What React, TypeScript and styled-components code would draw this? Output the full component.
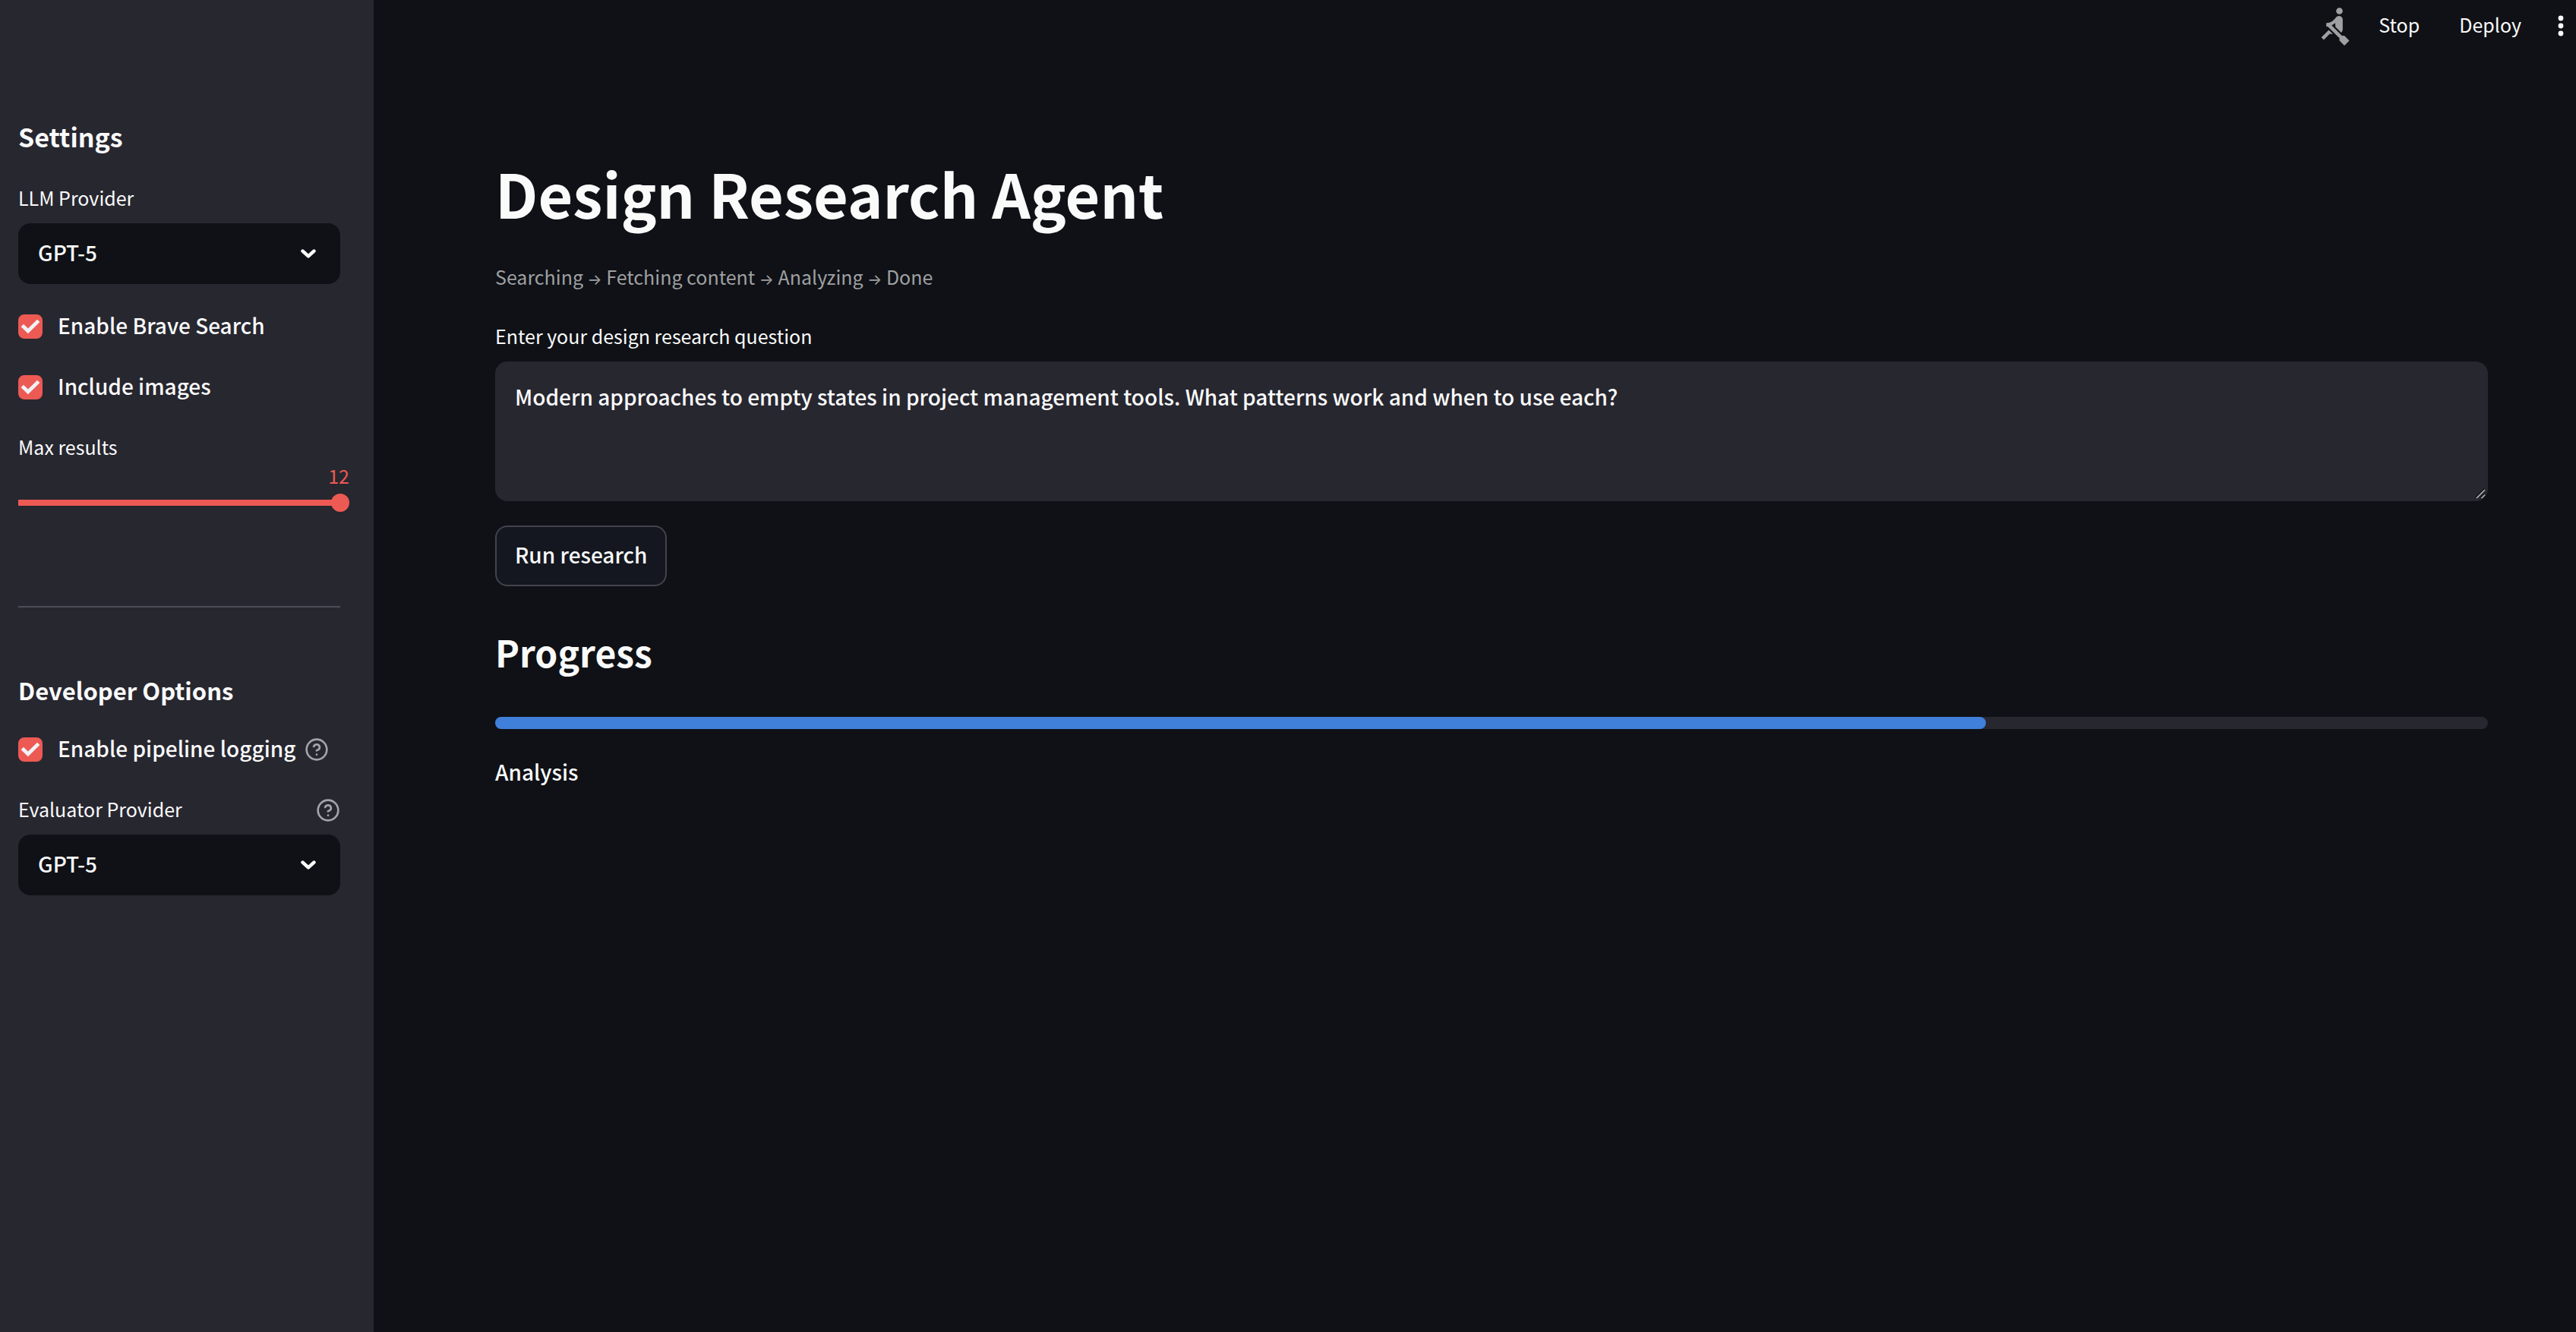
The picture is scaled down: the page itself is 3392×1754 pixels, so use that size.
import React, { useState } from 'react';
import styled, { createGlobalStyle } from 'styled-components';
import { MdRowing } from 'react-icons/md';

const color = {
  page: '#0f1116',
  panel: '#272730',
  text: '#fafafa',
  muted: '#9fa0a2',
  help: '#a3a4a8',
  accent: '#ed5a53',
  bar: '#4080da',
  rule: '#4b4c55',
  button: '#141720',
  buttonBorder: '#41444c',
};

const GlobalStyle = createGlobalStyle`
  *, *::before, *::after { box-sizing: border-box; }
  body {
    margin: 0;
    background: ${color.page};
    color: ${color.text};
    font-family: "Noto Sans CJK SC", "Noto Sans", sans-serif;
    font-size: 28px;
    font-weight: 500;
    line-height: 44px;
  }
  button, input, select, textarea { font: inherit; color: inherit; }
`;

const Shell = styled.div`
  display: flex;
  min-height: 100vh;
`;

const Sidebar = styled.aside`
  flex: 0 0 492px;
  display: flex;
  flex-direction: column;
  gap: 32px;
  padding: 154px 44px 64px 24px;
  background: ${color.panel};
`;

const SidebarTitle = styled.h2`
  margin: 0;
  font-size: 34px;
  line-height: 52px;
  font-weight: 700;
`;

const SidebarSubtitle = styled.h3`
  margin: 0;
  font-size: 31px;
  line-height: 44px;
  font-weight: 700;
`;

const Divider = styled.hr`
  width: 100%;
  height: 2px;
  margin: 64px 0 55px;
  border: 0;
  background: ${color.rule};
`;

const Field = styled.div`
  display: flex;
  flex-direction: column;
  gap: 8px;
`;

const LabelRow = styled.div`
  display: flex;
  justify-content: space-between;
  min-height: 48px;
`;

const FieldLabel = styled.label`
  font-size: 25px;
  font-weight: 400;
  line-height: 44px;
`;

const HelpButton = styled.button`
  display: flex;
  align-self: center;
  padding: 0;
  border: 0;
  background: none;
  color: ${color.help};
`;

const Stack = styled.div`
  display: grid;
  > * { grid-area: 1 / 1; }
`;

const SelectBox = styled.select`
  appearance: none;
  width: 100%;
  height: 80px;
  padding: 0 64px 4px 26px;
  border: 0;
  border-radius: 16px;
  background: ${color.page};
`;

const Chevron = styled.svg`
  place-self: center end;
  margin-right: 32px;
  pointer-events: none;
`;

const CheckRow = styled.div`
  display: flex;
  min-height: 48px;
`;

const CheckStack = styled(Stack)`
  align-self: center;
  margin-right: 20px;
`;

const CheckInput = styled.input`
  appearance: none;
  width: 32px;
  height: 32px;
  margin: 0;
  border: 2px solid ${color.rule};
  border-radius: 8px;
  &:checked { border-color: ${color.accent}; background: ${color.accent}; }
  &:not(:checked) + svg { display: none; }
`;

const Tick = styled.svg`
  place-self: center;
  pointer-events: none;
`;

const CheckLabel = styled.label`
  margin-right: 12px;
  white-space: nowrap;
`;

const SliderField = styled.div`
  display: flex;
  flex-direction: column;
  padding-bottom: 28px;
`;

const SliderValue = styled.output`
  margin: 0 -12px 12px 0;
  color: ${color.accent};
  font-size: 25px;
  font-weight: 400;
  line-height: 24px;
  text-align: right;
`;

const Slider = styled.input`
  appearance: none;
  width: calc(100% + 12px);
  height: 24px;
  margin: 0;
  border-radius: 4px;
  background: linear-gradient(${color.accent}, ${color.accent}) left center / calc(100% - 12px) 8px no-repeat;
  &::-webkit-slider-thumb {
    appearance: none;
    width: 24px;
    height: 24px;
    border-radius: 50%;
    background: ${color.accent};
  }
`;

const Main = styled.div`
  flex: 1;
  min-width: 0;
`;

const Toolbar = styled.header`
  display: flex;
  justify-content: flex-end;
  align-items: center;
  height: 68px;
`;

const ToolButton = styled.button`
  padding: 0 16px 4px;
  margin-left: 20px;
  border: 0;
  background: none;
  font-size: 25px;
  font-weight: 400;
  &:first-of-type { margin-left: 16px; }
`;

const MenuButton = styled.button`
  display: flex;
  margin-left: 16px;
  padding: 0;
  border: 0;
  background: none;
`;

const Content = styled.main`
  display: flex;
  flex-direction: column;
  gap: 32px;
  padding: 132px 116px 96px 160px;
`;

const Title = styled.h1`
  margin: 0;
  font-size: 79px;
  line-height: 108px;
  font-weight: 700;
`;

const Caption = styled.p`
  margin: 0;
  color: ${color.muted};
  font-size: 25px;
  font-weight: 400;
  line-height: 48px;
`;

const Arrow = styled.span`
  font-family: Inter, sans-serif;
  font-size: 20px;
  line-height: 24px;
`;

const Question = styled.textarea`
  display: block;
  width: 100%;
  height: 184px;
  padding: 24px 26px;
  border: 0;
  border-radius: 16px;
  background: ${color.panel};
  resize: vertical;
  &::-webkit-resizer { display: none; }
`;

const Grip = styled.svg`
  place-self: end;
  pointer-events: none;
`;

const RunButton = styled.button`
  align-self: flex-start;
  height: 80px;
  padding: 0 24px 4px;
  border: 2px solid ${color.buttonBorder};
  border-radius: 16px;
  background: ${color.button};
`;

const SectionTitle = styled.h2`
  margin: 0;
  padding: 20px 0;
  font-size: 48px;
  line-height: 68px;
  font-weight: 700;
`;

const ProgressBar = styled.progress`
  appearance: none;
  display: block;
  width: 100%;
  height: 16px;
  border: 0;
  &::-webkit-progress-bar { border-radius: 8px; background: ${color.panel}; }
  &::-webkit-progress-value { border-radius: 8px; background: ${color.bar}; }
`;

const Status = styled.p`
  margin: 0;
  line-height: 48px;
`;

function Help({ topic }: { topic: string }) {
  return (
    <HelpButton type="button" aria-label={`Help: ${topic}`}>
      <svg width="32" height="32" viewBox="0 0 24 24" fill="none" stroke="currentColor" strokeWidth="2" strokeLinecap="round" strokeLinejoin="round">
        <circle cx="12" cy="12" r="10" />
        <path d="M9.09 9a3 3 0 0 1 5.83 1c0 2-3 3-3 3" />
        <path d="M12 17h.01" />
      </svg>
    </HelpButton>
  );
}

function ProviderSelect({ id, label, help }: { id: string; label: string; help?: boolean }) {
  return (
    <Field>
      <LabelRow>
        <FieldLabel htmlFor={id}>{label}</FieldLabel>
        {help && <Help topic={label} />}
      </LabelRow>
      <Stack>
        <SelectBox id={id} defaultValue="GPT-5">
          <option>GPT-5</option>
        </SelectBox>
        <Chevron width="20" height="12" viewBox="0 0 20 12" fill="none" stroke={color.text} strokeWidth="4.6" strokeLinecap="round" strokeLinejoin="round">
          <path d="M2.6 2.6 10 9.4l7.4-6.8" />
        </Chevron>
      </Stack>
    </Field>
  );
}

function Check({ id, label, help }: { id: string; label: string; help?: boolean }) {
  return (
    <CheckRow>
      <CheckStack>
        <CheckInput type="checkbox" id={id} defaultChecked />
        <Tick width="26" height="20" viewBox="0 0 17 13" fill="#f0f2f6">
          <path d="M6.5 12.6.4 6.6l2.2-2.2 3.9 3.8L14.4.4l2.2 2.2z" />
        </Tick>
      </CheckStack>
      <CheckLabel htmlFor={id}>{label}</CheckLabel>
      {help && <Help topic={label} />}
    </CheckRow>
  );
}

export default function App() {
  const [max, setMax] = useState(12);
  return (
    <>
      <GlobalStyle />
      <Shell>
        <Sidebar>
          <SidebarTitle>Settings</SidebarTitle>
          <ProviderSelect id="llm" label="LLM Provider" />
          <Check id="brave" label="Enable Brave Search" />
          <Check id="images" label="Include images" />
          <SliderField>
            <LabelRow>
              <FieldLabel htmlFor="max">Max results</FieldLabel>
            </LabelRow>
            <SliderValue htmlFor="max">{max}</SliderValue>
            <Slider id="max" type="range" min={1} max={12} value={max} onChange={(e) => setMax(Number(e.target.value))} />
          </SliderField>
          <Divider />
          <SidebarSubtitle>Developer Options</SidebarSubtitle>
          <Check id="logging" label="Enable pipeline logging" help />
          <ProviderSelect id="evaluator" label="Evaluator Provider" help />
        </Sidebar>
        <Main>
          <Toolbar>
            <MdRowing size={52} color={color.muted} />
            <ToolButton type="button">Stop</ToolButton>
            <ToolButton type="button">Deploy</ToolButton>
            <MenuButton type="button" aria-label="Menu">
              <svg width="40" height="40" viewBox="0 0 40 40" fill="currentColor">
                <circle cx="20" cy="10" r="3.4" />
                <circle cx="20" cy="20" r="3.4" />
                <circle cx="20" cy="30" r="3.4" />
              </svg>
            </MenuButton>
          </Toolbar>
          <Content>
            <Title>Design Research Agent</Title>
            <Caption>
              Searching <Arrow>→</Arrow> Fetching content <Arrow>→</Arrow> Analyzing <Arrow>→</Arrow> Done
            </Caption>
            <Field>
              <LabelRow>
                <FieldLabel htmlFor="question">Enter your design research question</FieldLabel>
              </LabelRow>
              <Stack>
                <Question
                  id="question"
                  spellCheck={false}
                  defaultValue="Modern approaches to empty states in project management tools. What patterns work and when to use each?"
                />
                <Grip width="20" height="20" viewBox="0 0 20 20" fill="none" strokeWidth="1.6">
                  <path d="M4 15 15.500 3.500M10.500 15l5-5" stroke="#0f1116" />
                  <path d="M5 16 16 5M11.500 16l4.500-4.500" stroke="#b4b4b8" />
                </Grip>
              </Stack>
            </Field>
            <RunButton type="button">Run research</RunButton>
            <SectionTitle>Progress</SectionTitle>
            <ProgressBar value={74.8} max={100} aria-label="Progress" />
            <Status>Analysis</Status>
          </Content>
        </Main>
      </Shell>
    </>
  );
}
